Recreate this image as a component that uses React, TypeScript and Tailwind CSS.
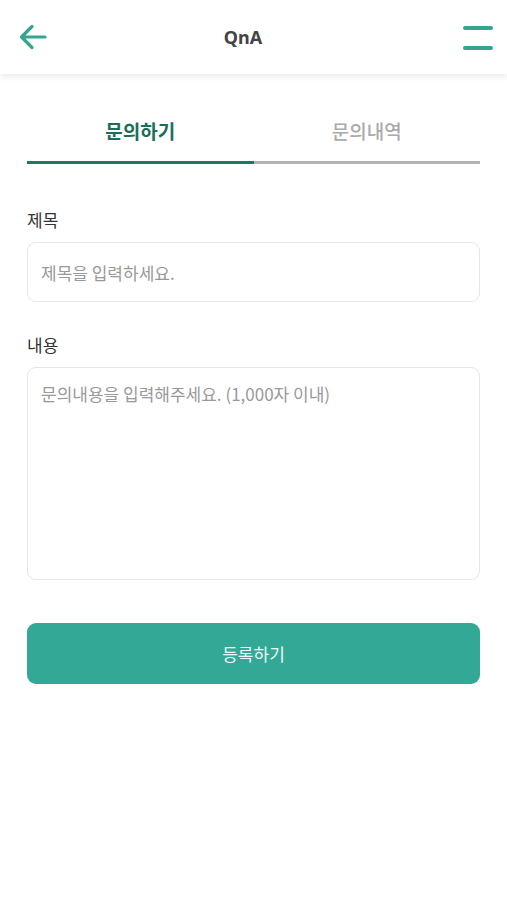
import { useState } from 'react'

const font = { fontFamily: '"Noto Sans CJK KR", "Noto Sans", sans-serif' }

function BackArrow() {
  return (
    <svg width="28" height="26" viewBox="0 0 28 26" fill="none">
      <path d="M26 13H3M13 2.5L2.5 13L13 23.5" stroke="#36a58f" strokeWidth="3.2" strokeLinecap="round" strokeLinejoin="round" />
    </svg>
  )
}

export default function App() {
  const [tab, setTab] = useState<'write' | 'list'>('write')
  const [title, setTitle] = useState('')
  const [content, setContent] = useState('')

  return (
    <div className="min-h-[900px] bg-white" style={font}>
      {/* Header */}
      <header className="relative flex h-[74px] items-center pl-[19px] pr-[14px] shadow-[0_3px_6px_rgba(0,0,0,0.08)]">
        <button className="flex h-[30px] w-[30px] items-center justify-start">
          <BackArrow />
        </button>
        <h1
          className="flex-1 pr-[26px] text-center text-[18px] font-bold text-[#444]"
          style={{ fontFamily: '"Noto Sans", "Noto Sans CJK KR", sans-serif' }}
        >
          QnA
        </h1>
        <button className="flex w-[30px] flex-col gap-[16px] pt-[1px]">
          <span className="block h-[4px] w-[30px] rounded-full bg-[#36a58f]" />
          <span className="block h-[4px] w-[30px] rounded-full bg-[#36a58f]" />
        </button>
      </header>

      <main className="px-[27px]">
        {/* Tabs */}
        <div className="flex">
          <button
            onClick={() => setTab('write')}
            className={`flex-1 pt-[45px] pb-[18px] text-[19px] leading-[24px] border-b-[3px] ${
              tab === 'write' ? 'font-bold text-[#1b6e5a] border-[#1b7a64]' : 'font-medium text-[#aaa] border-[#b3b3b3]'
            }`}
          >
            문의하기
          </button>
          <button
            onClick={() => setTab('list')}
            className={`flex-1 pt-[45px] pb-[18px] text-[19px] leading-[24px] border-b-[3px] ${
              tab === 'list' ? 'font-bold text-[#1b6e5a] border-[#1b7a64]' : 'font-medium text-[#aaa] border-[#b3b3b3]'
            }`}
          >
            문의내역
          </button>
        </div>

        {/* 제목 */}
        <label className="mt-[44px] block text-[17px] leading-[24px] text-[#333]">제목</label>
        <input
          value={title}
          onChange={(e) => setTitle(e.target.value)}
          placeholder="제목을 입력하세요."
          className="mt-[10px] block h-[60px] w-full rounded-[9px] border border-[#e6e6e6] px-[13px] text-[17px] text-[#333] outline-none placeholder:text-[#999]"
          style={font}
        />

        {/* 내용 */}
        <label className="mt-[31px] block text-[17px] leading-[24px] text-[#333]">내용</label>
        <textarea
          value={content}
          onChange={(e) => setContent(e.target.value)}
          placeholder="문의내용을 입력해주세요. (1,000자 이내)"
          className="mt-[10px] block h-[213px] w-full resize-none rounded-[9px] border border-[#e6e6e6] px-[13px] pt-[14px] text-[17px] leading-[24px] text-[#333] outline-none placeholder:text-[#999]"
          style={font}
        />

        <button className="mt-[43px] flex h-[61px] w-full items-center justify-center rounded-[9px] bg-[#34a896] text-[17px] text-[#eef8f6]">
          등록하기
        </button>
      </main>
    </div>
  )
}
